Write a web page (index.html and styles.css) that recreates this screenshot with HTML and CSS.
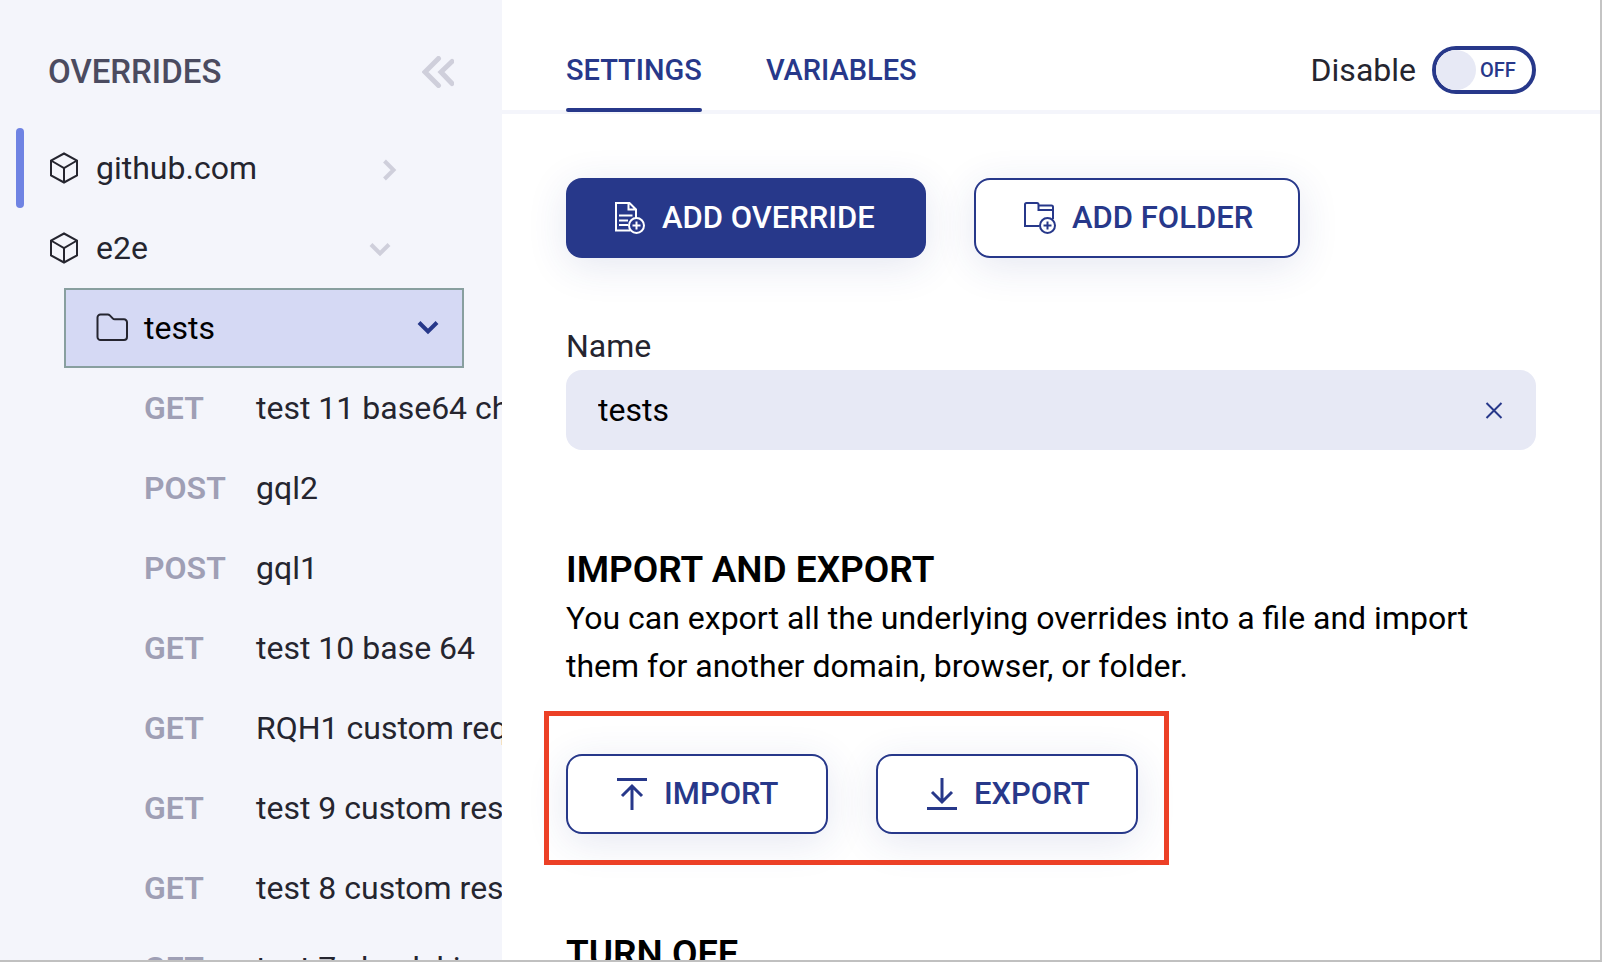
FILE: index.html
```html
<!DOCTYPE html>
<html lang="en">
<head>
<meta charset="utf-8">
<meta name="viewport" content="width=device-width, initial-scale=1">
<title>Overrides</title>
<link rel="stylesheet" href="styles.css">
</head>
<body>
<div class="app">
  <aside class="sidebar">
    <header class="sidebar-header">
      <h1 class="sidebar-title">OVERRIDES</h1>
      <button class="icon-button" type="button" aria-label="Collapse sidebar">
        <svg class="icon icon-collapse" viewBox="0 0 32 32"><path d="M16.500 2.500 3 16l13.500 13.500M30 5.500 19 16l11 11.500"/></svg>
      </button>
    </header>
    <nav class="tree" aria-label="Overrides">
      <button class="row domain active" type="button">
        <svg class="icon cube" viewBox="0 0 32 32"><path d="M16 1.500 29 8.500v15L16 30.500 3 23.500v-15zM3 8.500l13 7.500 13-7.500M16 16v14.500"/></svg>
        <span class="row-name">github.com</span>
        <svg class="icon chevron" viewBox="0 0 32 32"><path d="m16.500 9 9 9-9 9"/></svg>
      </button>
      <button class="row domain" type="button">
        <svg class="icon cube" viewBox="0 0 32 32"><path d="M16 1.500 29 8.500v15L16 30.500 3 23.500v-15zM3 8.500l13 7.500 13-7.500M16 16v14.500"/></svg>
        <span class="row-name">e2e</span>
        <svg class="icon chevron" viewBox="0 0 32 32"><path d="m3 12.500 9 9 9-9"/></svg>
      </button>
      <button class="row folder" type="button" aria-current="true">
        <svg class="icon folder-icon" viewBox="0 0 32 32"><path d="M1.500 25V5.500a3 3 0 0 1 3-3h7.200a3 3 0 0 1 2.100.9l2.900 3a3 3 0 0 0 2.100.9H28a3 3 0 0 1 3 3V25a3 3 0 0 1-3 3H4.500a3 3 0 0 1-3-3z"/></svg>
        <span class="row-name">tests</span>
        <svg class="icon chevron" viewBox="0 0 32 32"><path d="m7 10.500 9 9 9-9"/></svg>
      </button>
      <button class="row request" type="button"><span class="method">GET</span><span class="request-name">test 11 base64 check</span></button>
      <button class="row request" type="button"><span class="method">POST</span><span class="request-name">gql2</span></button>
      <button class="row request" type="button"><span class="method">POST</span><span class="request-name">gql1</span></button>
      <button class="row request" type="button"><span class="method">GET</span><span class="request-name">test 10 base 64</span></button>
      <button class="row request" type="button"><span class="method">GET</span><span class="request-name">RQH1 custom request</span></button>
      <button class="row request" type="button"><span class="method">GET</span><span class="request-name">test 9 custom response</span></button>
      <button class="row request" type="button"><span class="method">GET</span><span class="request-name">test 8 custom response</span></button>
      <button class="row request" type="button"><span class="method">GET</span><span class="request-name">test 7 check ki</span></button>
    </nav>
  </aside>

  <main class="main">
    <header class="topbar">
      <div class="tabs" role="tablist">
        <button class="tab selected" type="button" role="tab" aria-selected="true">SETTINGS</button>
        <button class="tab" type="button" role="tab" aria-selected="false">VARIABLES</button>
      </div>
      <div class="disable">
        <label for="disable">Disable</label>
        <label class="toggle"><input class="knob" id="disable" type="checkbox" role="switch"><span class="toggle-text">OFF</span></label>
      </div>
    </header>

    <div class="content">
      <div class="actions">
        <button class="button primary add-override" type="button">
          <svg class="icon" viewBox="0 0 32 32"><path d="M16 28.500H2V1h13.500L22 7.500V16M14.500 1.500V7.500H21.500M5 13.500h13.500M5 18.500h9M5 23h9"/><circle cx="22.500" cy="23.500" r="7.500"/><path d="M22.500 19.500v8M18.500 23.500h8"/></svg>
          ADD OVERRIDE
        </button>
        <button class="button add-folder" type="button">
          <svg class="icon" viewBox="0 0 32 32"><path d="M15.500 24H1V2.500A1.500 1.500 0 0 1 2.500 1H13a1.500 1.500 0 0 1 1.500 1.500V8H29M15 3.500h12.500A1.500 1.500 0 0 1 29 5v12"/><circle cx="23.500" cy="23.500" r="7.500"/><path d="M23.500 19.500v8M19.500 23.500h8"/></svg>
          ADD FOLDER
        </button>
      </div>

      <div class="field">
        <label class="field-label" for="name">Name</label>
        <div class="field-box">
          <input class="field-input" id="name" type="text" value="tests">
          <button class="icon-button" type="button" aria-label="Clear name">
            <svg class="icon clear" viewBox="0 0 20 20"><path d="m2.500 3 15 15M17.500 3l-15 15"/></svg>
          </button>
        </div>
      </div>

      <section class="section">
        <h2 class="section-title">IMPORT AND EXPORT</h2>
        <p class="section-text">You can export all the underlying overrides into a file and import them for another domain, browser, or folder.</p>
        <div class="actions highlighted">
          <button class="button transfer" type="button">
            <svg class="icon bold" viewBox="0 0 32 32"><path d="M1 1.500h30M16 32V8M6 18 16 8l10 10"/></svg>
            IMPORT
          </button>
          <button class="button transfer" type="button">
            <svg class="icon bold" viewBox="0 0 32 32"><path d="M1 30.500h30M16 0v24M6 14l10 10 10-10"/></svg>
            EXPORT
          </button>
        </div>
      </section>

      <section class="section">
        <h2 class="section-title">TURN OFF</h2>
      </section>
    </div>
  </main>
</div>
</body>
</html>
```
FILE: styles.css
```css
*,
*::before,
*::after {
  box-sizing: border-box;
}

body {
  margin: 0;
  background: #fff;
  color: #000;
  font: 32px/48px Roboto, "Noto Sans", sans-serif;
}

h1,
h2,
p {
  margin: 0;
}

button,
input {
  margin: 0;
  padding: 0;
  border: 0;
  background: none;
  color: inherit;
  font: inherit;
}

button {
  cursor: pointer;
}

.app {
  display: flex;
  height: 100vh;
  overflow: hidden;
  border-right: 2px solid #c4c4c4;
  border-bottom: 2px solid #c0c0c0;
}

.icon {
  flex: none;
  width: 32px;
  height: 32px;
  fill: none;
  stroke: currentColor;
  stroke-width: 2;
}

.icon-button {
  display: flex;
}

/* Sidebar */

.sidebar {
  flex: none;
  width: 502px;
  overflow: hidden;
  background: #f4f5fb;
  color: #25252f;
}

.sidebar-header {
  display: flex;
  align-items: center;
  justify-content: space-between;
  height: 128px;
  padding: 16px 48px 0;
}

.sidebar-title {
  color: #4b4b60;
  font-size: 33px;
  font-weight: 500;
}

.icon-collapse {
  color: #cfcfdb;
  stroke-width: 5;
  stroke-linecap: round;
}

.tree {
  display: flex;
  flex-direction: column;
}

.row {
  display: flex;
  align-items: center;
  flex: none;
  height: 80px;
  text-align: left;
  white-space: nowrap;
}

.row-name {
  flex: 1;
}

.domain {
  position: relative;
  gap: 16px;
  padding: 0 102px 0 48px;
}

.domain.active::before {
  content: "";
  position: absolute;
  top: 0;
  bottom: 0;
  left: 16px;
  width: 8px;
  border-radius: 4px;
  background: #6f83e3;
}

.chevron {
  color: #cfcfdb;
  stroke-width: 4;
}

.folder {
  gap: 16px;
  margin: 0 38px 0 64px;
  padding: 0 18px 0 30px;
  border: 2px solid #889f9f;
  background: #d5d9f4;
  color: #000;
}

.folder-icon {
  color: #25252f;
}

.folder .chevron {
  color: #27388a;
}

.request {
  padding-left: 144px;
}

.method {
  flex: none;
  width: 112px;
  color: #9f9fb5;
  font-weight: 600;
}

/* Main area */

.main {
  flex: 1;
  min-width: 0;
}

.topbar {
  display: flex;
  justify-content: space-between;
  height: 114px;
  padding: 0 64px;
  border-bottom: 4px solid #f4f5fb;
}

.tabs {
  display: flex;
  gap: 64px;
}

.tab {
  position: relative;
  height: 112px;
  padding-top: 28px;
  color: #27388a;
  font-size: 29px;
  font-weight: 500;
}

.tab.selected::after {
  content: "";
  position: absolute;
  right: 0;
  bottom: 0;
  left: 0;
  height: 4px;
  border-radius: 2px;
  background: #27388a;
}

.disable {
  display: flex;
  align-items: center;
  gap: 16px;
  padding-top: 30px;
  color: #25252f;
}

.toggle {
  display: flex;
  align-items: center;
  gap: 4px;
  width: 104px;
  height: 48px;
  border: 4px solid #27388a;
  border-radius: 24px;
  background: #fff;
  color: #27388a;
  font-size: 20px;
  font-weight: 500;
}

.knob {
  appearance: none;
  width: 40px;
  height: 40px;
  border-radius: 50%;
  background: #e7e9f5;
}

.content {
  padding: 64px;
}

.actions {
  display: flex;
  gap: 48px;
}

.button {
  display: flex;
  align-items: center;
  gap: 16px;
  height: 80px;
  padding: 0 48px;
  border: 2px solid #27388a;
  border-radius: 16px;
  background: #fff;
  box-shadow: 0 8px 40px rgba(39, 56, 138, 0.12);
  color: #27388a;
  font-size: 31px;
  font-weight: 500;
  white-space: nowrap;
}

.primary {
  border: 0;
  background: #27388a;
  color: #fff;
}

.add-override {
  width: 360px;
}

.add-folder {
  width: 326px;
}

.transfer {
  width: 262px;
}

.bold {
  stroke-width: 3;
}

.field {
  margin-top: 64px;
}

.field-label {
  display: block;
  height: 48px;
  color: #25252f;
}

.field-box {
  display: flex;
  align-items: center;
  height: 80px;
  padding: 0 32px;
  border-radius: 16px;
  background: #e7e9f5;
}

.field-input {
  flex: 1;
  min-width: 0;
  outline: 0;
}

.clear {
  width: 20px;
  height: 20px;
  color: #27388a;
}

.section {
  margin-top: 96px;
}

.section-title {
  font-size: 37px;
  font-weight: 600;
}

.section-text {
  margin-bottom: 64px;
}

.highlighted {
  position: relative;
  width: fit-content;
}

.highlighted::after {
  content: "";
  position: absolute;
  inset: -43px -31px -31px -22px;
  border: 5px solid #ec4026;
  pointer-events: none;
}
```
